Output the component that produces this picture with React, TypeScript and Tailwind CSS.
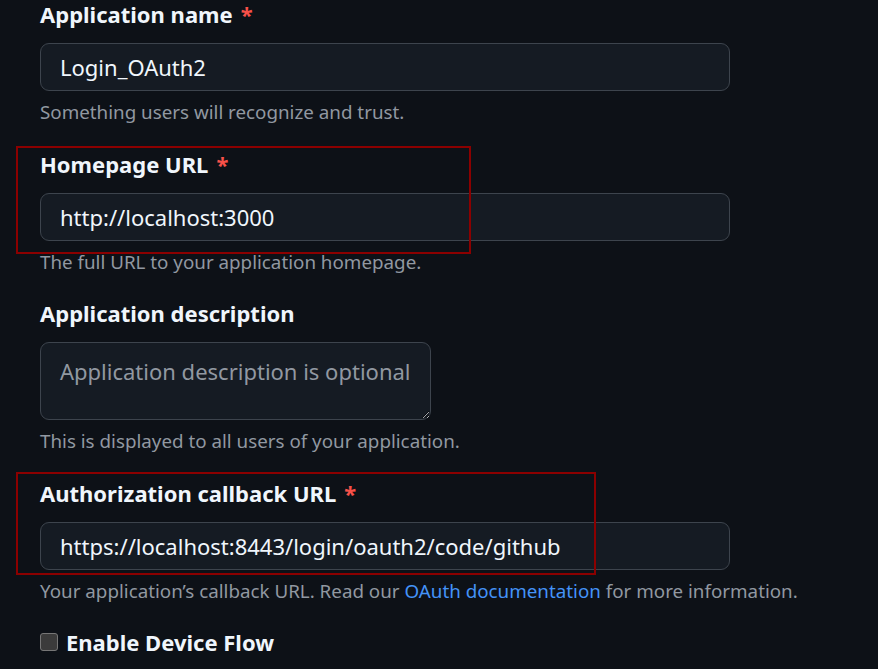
import React from "react";

const font = { fontFamily: '"Noto Sans", "Open Sans", sans-serif' };

interface FieldProps {
  label: string;
  required?: boolean;
  help: React.ReactNode;
  children: React.ReactNode;
}

function Field({ label, required, help, children }: FieldProps) {
  return (
    <div className="mb-[23.5px]">
      <label className="block h-[30px] text-[22px] font-bold leading-[28px] text-[#f0f6fc]">
        {label}
        {required && <span className="ml-[8px] text-[#f85149]">*</span>}
      </label>
      <div className="mt-[13px]">{children}</div>
      <p className="mt-[8px] text-[18.8px] leading-[27px] text-[#9198a1]">{help}</p>
    </div>
  );
}

function TextInput({ value }: { value: string }) {
  return (
    <input
      readOnly
      value={value}
      className="block h-[48px] w-[690px] rounded-[9px] border border-[#3d444d] bg-[#151b23] px-[19px] text-[22px] text-[#f0f6fc] outline-none"
      style={font}
    />
  );
}

export default function App() {
  return (
    <div className="relative min-h-[669px] w-full overflow-hidden bg-[#0d1117]" style={font}>
      <div className="px-[40px] pt-0">
        <Field label="Application name" required help="Something users will recognize and trust.">
          <TextInput value="Login_OAuth2" />
        </Field>

        <Field label="Homepage URL" required help="The full URL to your application homepage.">
          <TextInput value="http://localhost:3000" />
        </Field>

        <Field label="Application description" help="This is displayed to all users of your application.">
          <textarea
            readOnly
            placeholder="Application description is optional"
            className="block h-[78px] w-[391px] resize-y rounded-[9px] border border-[#3d444d] bg-[#151b23] px-[19px] pt-[13px] text-[22px] leading-[31px] text-[#f0f6fc] outline-none placeholder:text-[#9198a1] [color-scheme:dark]"
            style={font}
          />
        </Field>

        <Field
          label="Authorization callback URL"
          required
          help={
            <>
              Your application’s callback URL. Read our{" "}
              <a className="text-[#4493f8]">OAuth documentation</a> for more information.
            </>
          }
        >
          <TextInput value="https://localhost:8443/login/oauth2/code/github" />
        </Field>

        <div className="mt-[3px] flex items-center gap-[8px]">
          <span className="block h-[18px] w-[18px] rounded-[3px] border border-[#767676] bg-[#3b3b3b]" />
          <span className="text-[22px] font-bold leading-[28px] text-[#f0f6fc]">Enable Device Flow</span>
        </div>
      </div>

      {/* annotation boxes */}
      <div className="pointer-events-none absolute left-[16px] top-[146px] h-[108px] w-[455px] border-2 border-[#8b0000]" />
      <div className="pointer-events-none absolute left-[16px] top-[472px] h-[103px] w-[580px] border-2 border-[#8b0000]" />
    </div>
  );
}
